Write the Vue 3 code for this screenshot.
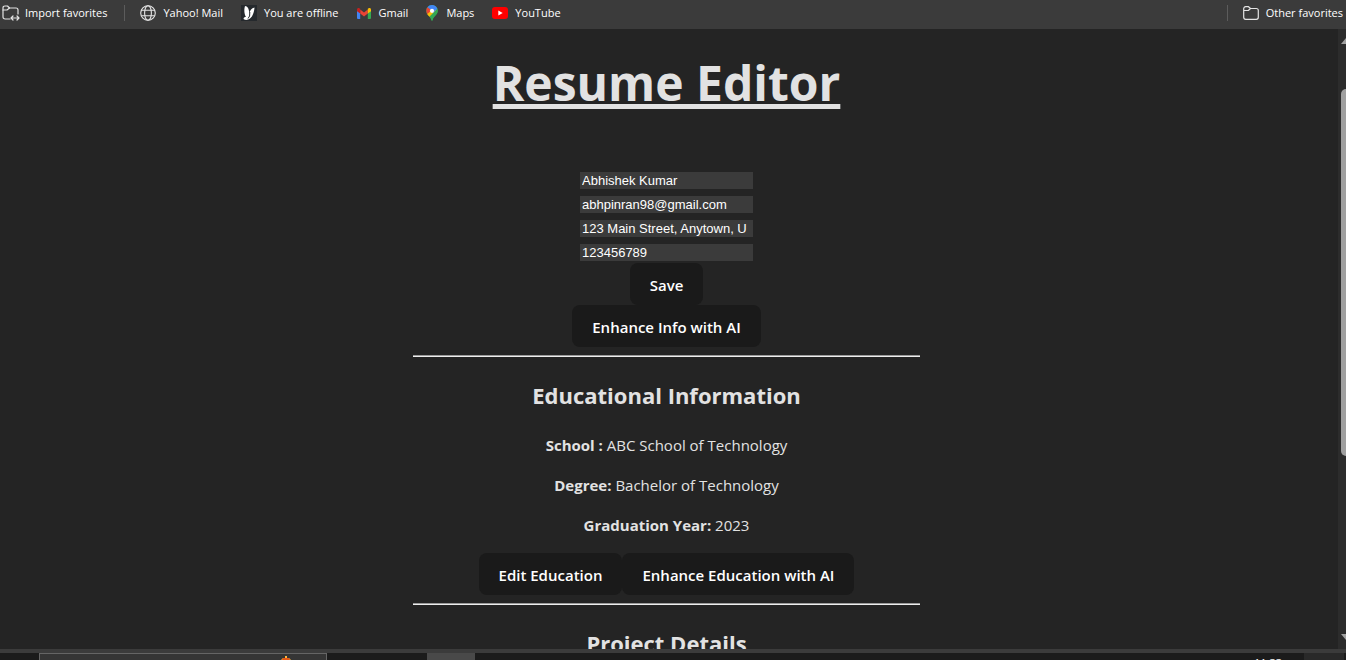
<script setup>
import { ref } from 'vue'

const fields = ref([
  { id: 'name', label: 'Name', type: 'text', value: 'Abhishek Kumar' },
  { id: 'email', label: 'Email', type: 'email', value: 'abhpinran98@gmail.com' },
  { id: 'address', label: 'Address', type: 'text', value: '123 Main Street, Anytown, U' },
  { id: 'phone', label: 'Phone', type: 'tel', value: '123456789' },
])
const education = [
  { term: 'School :', detail: 'ABC School of Technology' },
  { term: 'Degree:', detail: 'Bachelor of Technology' },
  { term: 'Graduation Year:', detail: '2023' },
]
</script>

<template>
  <div class="window">
    <nav class="favorites" aria-label="Favorites bar">
      <button class="fav import" type="button">
        <svg width="18" height="16" viewBox="0 0 18 16" fill="none" stroke="#e4e4e4" stroke-width="1.2" stroke-linecap="round" stroke-linejoin="round">
          <path d="M8 14H3.200Q1 14 1 11.800V3Q1 1 3 1H5.500L7.500 3H14Q16 3 16 5V9" />
          <path d="M1 5H5L7.500 3M9 13H17M11 11L9 13L11 15M15 11L17 13L15 15" />
        </svg>
        Import favorites
      </button>
      <span class="divider"></span>
      <a class="fav yahoo" href="#">
        <svg width="16" height="16" viewBox="0 0 16 16" fill="none" stroke="#e4e4e4" stroke-width="1.1">
          <circle cx="8" cy="8" r="7.300" />
          <ellipse cx="8" cy="8" rx="3.400" ry="7.300" />
          <path d="M1.300 5.200H14.700M1.300 10.800H14.700" />
        </svg>
        Yahoo! Mail
      </a>
      <a class="fav offline" href="#">
        <svg width="16" height="16" viewBox="0 0 16 16">
          <path fill="#25292d" d="M0 0H16V16H0Z" />
          <path fill="#fff" d="M4 1C6.500 1 8.300 4 8.300 8.500C9 5.500 10.500 3 13.500 2.500C13.300 6 12 11.500 9 13.500C7 15.300 3 15.500 2.500 13.500C2.800 12.300 4 12 5 12C3.300 9.500 2.800 4.500 4 1Z" />
          <path fill="none" stroke="#25292d" stroke-width="1" d="M8.800 7L8.600 11L7 13.500" />
        </svg>
        You are offline
      </a>
      <a class="fav gmail" href="#">
        <svg width="14" height="11" viewBox="0 0 14 11">
          <path fill="#4285f4" d="M0 2L3.200 4V11H1Q0 11 0 10Z" />
          <path fill="#34a853" d="M10.800 4L14 2V10Q14 11 13 11H10.800Z" />
          <path fill="#ea4335" d="M3.200 1.500L7 4.400L10.800 1.500V5.500L7 8.500L3.200 5.500Z" />
          <path fill="#c5221f" d="M0 1.800C0 0 1.800-.400 3.200.800V5.500L0 3.200Z" />
          <path fill="#fbbc04" d="M14 1.800C14 0 12.200-.400 10.800.800V5.500L14 3.200Z" />
        </svg>
        Gmail
      </a>
      <a class="fav maps" href="#">
        <svg width="12" height="16" viewBox="0 0 12 16">
          <path fill="#34a853" d="M6 0A5.800 5.800 0 0 1 11.800 6C11.800 10 7.500 11 6.600 15Q6 16.500 5.400 15C4.500 11 .2 10 .2 6A5.800 5.800 0 0 1 6 0Z" />
          <path fill="#fbbc04" d="M1 8.700L7.500 1.400L11 6L4 12Q2 10.500 1 8.700Z" />
          <path fill="#34a853" d="M11.300 3.700Q12.600 7 9.700 10Q7 12.500 6.600 15Q6 16.500 5.400 15Q5 13 3.600 11.500Z" />
          <path fill="#4285f4" d="M1.500 2.300Q3 0 6 0Q9.800 0 11.300 3.700L7 8Z" />
          <path fill="#ea4335" d="M1.500 2.300L5.500 5.500L1.100 9Q-.7 5 1.500 2.300Z" />
          <circle cx="6" cy="5.800" r="2.100" fill="#fff" />
        </svg>
        Maps
      </a>
      <a class="fav youtube" href="#">
        <svg width="16" height="12" viewBox="0 0 16 12">
          <rect width="16" height="12" rx="3" fill="#f00" />
          <path fill="#fff" d="M6.300 3.400V8.600L10.700 6Z" />
        </svg>
        YouTube
      </a>
      <span class="divider last"></span>
      <button class="fav other" type="button">
        <svg width="16" height="14" viewBox="0 0 16 14" fill="none" stroke="#e4e4e4" stroke-width="1.200" stroke-linejoin="round">
          <path d="M.700 3Q.700.700 2.700.700H5.500L7.500 2.500H13.300Q15.300 2.500 15.300 4.500V11.300Q15.300 13.300 13.300 13.300H2.700Q.700 13.300.700 11.300ZM.700 4.500H5.300L7.500 2.500" />
        </svg>
        Other favorites
      </button>
    </nav>

    <div class="viewport">
      <main class="page">
        <h1>Resume Editor</h1>
        <form class="info" @submit.prevent>
          <div class="fields">
            <input
              v-for="field in fields"
              :id="field.id"
              :key="field.id"
              v-model="field.value"
              :type="field.type"
              :aria-label="field.label"
            />
          </div>
          <button class="action" type="submit">Save</button>
          <button class="action" type="button">Enhance Info with AI</button>
        </form>
        <hr />
        <section>
          <h2>Educational Information</h2>
          <p v-for="row in education" :key="row.term"><strong>{{ row.term }}</strong> {{ row.detail }}</p>
          <div class="actions">
            <button class="action" type="button">Edit Education</button>
            <button class="action" type="button">Enhance Education with AI</button>
          </div>
        </section>
        <hr />
        <section>
          <h2>Project Details</h2>
        </section>
      </main>
      <div class="scrollbar" aria-hidden="true">
        <svg class="arrow" width="10" height="6" viewBox="0 0 10 6"><path fill="#a0a0a0" d="M0 6L5 0L10 6Z" /></svg>
        <span class="thumb"></span>
        <svg class="arrow" width="10" height="6" viewBox="0 0 10 6"><path fill="#a0a0a0" d="M0 0H10L5 6Z" /></svg>
      </div>
    </div>

    <footer class="taskbar">
      <div class="search">
        <svg width="50" height="6" viewBox="0 0 50 6">
          <path fill="#8a7355" d="M1 5H3V6H1ZM45 5H47V6H45Z" />
          <path fill="#ffb637" d="M23 1H25V3H27L29 5V6H19V5L21 3H23Z" />
          <path fill="#e65916" d="M21 3H27L28 5H20Z" />
        </svg>
      </div>
      <span class="task"></span>
      <time class="clock">11:33</time>
      <span class="tray"></span>
    </footer>
  </div>
</template>

<style>
body {
  margin: 0;
  background: #242424;
}
</style>

<style scoped>
.window {
  display: flex;
  flex-direction: column;
  height: 100vh;
  overflow: hidden;
  background: #242424;
  color: #e2e2e2;
  font-family: "Segoe UI", "Open Sans", "Noto Sans", sans-serif;
}
.favorites {
  display: flex;
  flex: none;
  align-items: center;
  box-sizing: border-box;
  height: 29px;
  padding: 0 3px 3px 2px;
  background: #3b3b3b;
}
.fav {
  display: flex;
  align-items: center;
  gap: 7px;
  margin-left: 18px;
  padding: 0;
  border: 0;
  background: none;
  color: #fff;
  font: 11px/16px "Segoe UI", "Open Sans", "Noto Sans", sans-serif;
  text-decoration: none;
  white-space: nowrap;
}
.fav svg {
  flex: none;
}
.fav.import,
.divider + .fav {
  margin-left: 0;
}
.fav.import {
  gap: 5px;
}
.fav.gmail,
.fav.maps {
  gap: 8px;
}
.divider {
  width: 1px;
  height: 16px;
  margin: 0 15px 0 17px;
  background: #5c5c5c;
}
.divider.last {
  margin-left: auto;
}
.viewport {
  display: flex;
  flex: 1;
  min-height: 0;
  overflow: hidden;
}
.page {
  flex: 1;
  padding-right: 5px;
  text-align: center;
}
h1 {
  margin: 19px 0 54px;
  font-size: 48px;
  font-weight: 700;
  line-height: 70px;
  text-decoration: underline;
  text-decoration-thickness: 5px;
  text-underline-offset: 3px;
  text-decoration-skip-ink: none;
}
.info,
.fields {
  display: flex;
  flex-direction: column;
  align-items: center;
}
.fields {
  gap: 7px;
  margin-bottom: 2px;
}
.fields input {
  box-sizing: border-box;
  width: 173px;
  height: 17px;
  margin: 0;
  padding: 0 2px;
  border: 0;
  background: #3b3b3b;
  color: #fff;
  font: 13px/17px "Liberation Sans", Arial, sans-serif;
}
.action {
  height: 42px;
  padding: 2px 20px 0;
  border: 0;
  border-radius: 8px;
  background: #1a1a1a;
  color: #fff;
  font: 600 15px/24px "Segoe UI", "Open Sans", "Noto Sans", sans-serif;
  white-space: nowrap;
}
hr {
  max-width: 507px;
  height: 1px;
  margin: 8px auto;
  border: 0;
  border-top: 1px solid #9a9a9a;
  background: #eee;
}
h2 {
  margin: 0;
  padding: 12px 0 20px;
  font-size: 22px;
  font-weight: 700;
  line-height: 36px;
}
p {
  margin: 0 0 16px;
  font-size: 15px;
  line-height: 24px;
}
.actions {
  display: flex;
  justify-content: center;
}
.scrollbar {
  display: flex;
  flex: none;
  flex-direction: column;
  align-items: flex-start;
  box-sizing: border-box;
  width: 8px;
  padding: 9px 0 9px 3px;
  overflow: hidden;
  background: #2c2c2c;
}
.arrow {
  flex: none;
}
.thumb {
  width: 10px;
  height: 61%;
  margin: 45px 0 auto;
  border-radius: 5px;
  background: #9f9f9f;
}
.taskbar {
  display: flex;
  flex: none;
  height: 7px;
  overflow: hidden;
  border-top: 4px solid #3b3b3b;
  background: #1b1b1b;
}
.search {
  display: flex;
  justify-content: flex-end;
  box-sizing: border-box;
  width: 288px;
  height: 32px;
  margin-left: 39px;
  padding: 1px 14px 0 0;
  border: 1px solid #656565;
  background: #353535;
}
.task {
  width: 48px;
  margin-left: 100px;
  background: #494949;
}
.clock {
  margin: 2px 22px 0 auto;
  color: #fff;
  font-size: 11px;
  line-height: 16px;
}
.tray {
  width: 40px;
  margin-right: 2px;
  background: #292929;
}
</style>
